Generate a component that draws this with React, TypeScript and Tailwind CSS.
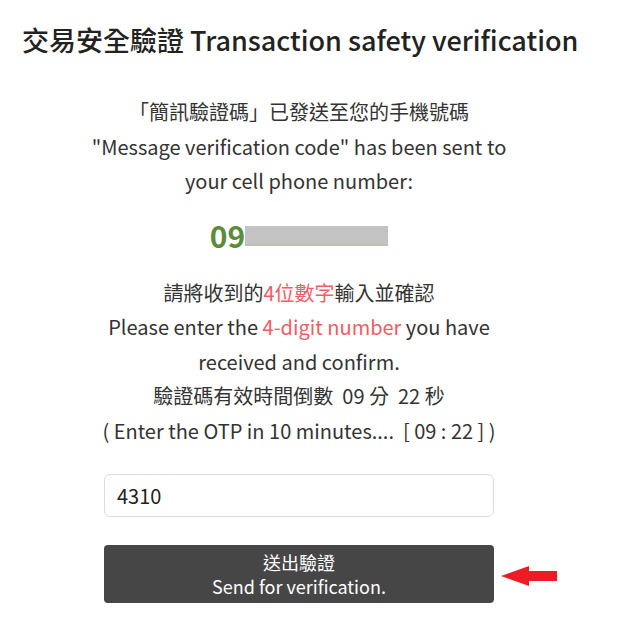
import { useState } from "react";

const font = { fontFamily: '"Noto Sans CJK TC", "Noto Sans", sans-serif' };

export default function App() {
  const [otp, setOtp] = useState("4310");

  return (
    <div className="min-h-screen bg-white text-[#333]" style={font}>
      <div className="px-[22px] pt-[20px]">
        <h1 className="text-[27px] leading-[40px] font-medium text-[#222] whitespace-nowrap">
          交易安全驗證 Transaction safety verification
        </h1>
      </div>

      <div className="ml-[104px] w-[390px] flex flex-col items-center">
        {/* sent notice */}
        <div className="mt-[35px] text-[20px] leading-[34.5px] text-center whitespace-nowrap">
          <div>「簡訊驗證碼」已發送至您的手機號碼</div>
          <div>"Message verification code" has been sent to</div>
          <div>your cell phone number:</div>
        </div>

        {/* masked phone */}
        <div className="mt-[19px] h-[40px] flex items-center text-[30px] font-bold text-[#5b8c3a] leading-none pb-[6px]">
          <span>09</span>
          <span className="inline-block w-[143px] h-[20px] bg-[#c3c3c3] border-b-[2px] border-[#b9c4ad] mt-[3px]" />
        </div>

        {/* instructions */}
        <div className="mt-[18px] text-[20px] leading-[34.5px] text-center whitespace-nowrap">
          <div>
            請將收到的<span className="text-[#f25c64]">4位數字</span>輸入並確認
          </div>
          <div>
            Please enter the <span className="text-[#f25c64]">4-digit number</span> you have
          </div>
          <div>received and confirm.</div>
          <div>驗證碼有效時間倒數&nbsp; 09 分&nbsp; 22 秒</div>
          <div>( Enter the OTP in 10 minutes....&nbsp; [ 09 : 22 ] )</div>
        </div>
      </div>

      <div className="ml-[104px] mt-[26px] w-[390px]">
        <input
          value={otp}
          onChange={e => setOtp(e.target.value)}
          className="w-full h-[43px] border border-[#dcdcdc] rounded-[6px] px-[12px] text-[20px] text-[#222] outline-none"
        />
      </div>

      <div className="ml-[104px] mt-[28px] flex items-center gap-[7px]">
        <button className="w-[390px] h-[58px] bg-[#464646] rounded-[4px] text-white text-[18px] leading-[24px] flex flex-col items-center justify-center">
          <span>送出驗證</span>
          <span>Send for verification.</span>
        </button>
        <svg width="56" height="22" viewBox="0 0 56 22" className="mt-[4px]">
          <polygon points="0,11 28,1 28,6 56,6 56,16 28,16 28,21" fill="#ed1c24" />
        </svg>
      </div>
    </div>
  );
}
